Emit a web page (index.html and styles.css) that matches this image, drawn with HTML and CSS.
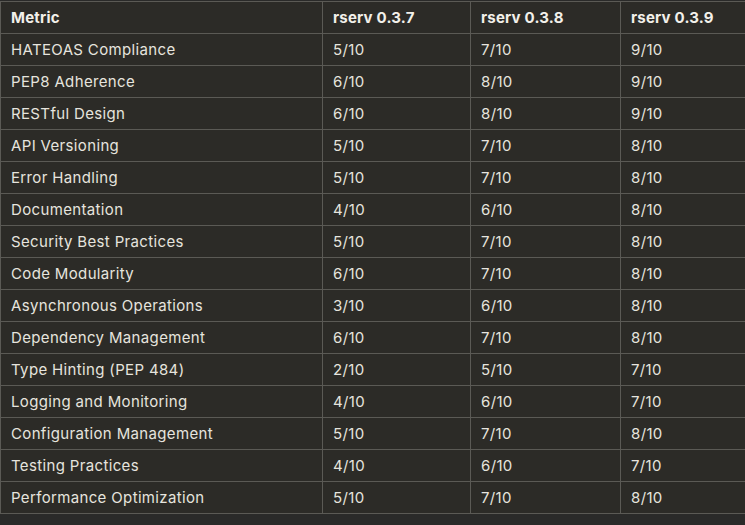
FILE: index.html
```html
<!DOCTYPE html>
<html>
<head>
<meta charset="utf-8">
<link rel="stylesheet" href="styles.css">
</head>
<body>
<div class="wrap">
<table class="grid">
<thead>
<tr><th class="c1">Metric</th><th class="c2">rserv 0.3.7</th><th class="c3">rserv 0.3.8</th><th class="c4">rserv 0.3.9</th></tr>
</thead>
<tbody>
<tr><td>HATEOAS Compliance</td><td>5/10</td><td>7/10</td><td>9/10</td></tr>
<tr><td>PEP8 Adherence</td><td>6/10</td><td>8/10</td><td>9/10</td></tr>
<tr><td>RESTful Design</td><td>6/10</td><td>8/10</td><td>9/10</td></tr>
<tr><td>API Versioning</td><td>5/10</td><td>7/10</td><td>8/10</td></tr>
<tr><td>Error Handling</td><td>5/10</td><td>7/10</td><td>8/10</td></tr>
<tr><td>Documentation</td><td>4/10</td><td>6/10</td><td>8/10</td></tr>
<tr><td>Security Best Practices</td><td>5/10</td><td>7/10</td><td>8/10</td></tr>
<tr><td>Code Modularity</td><td>6/10</td><td>7/10</td><td>8/10</td></tr>
<tr><td>Asynchronous Operations</td><td>3/10</td><td>6/10</td><td>8/10</td></tr>
<tr><td>Dependency Management</td><td>6/10</td><td>7/10</td><td>8/10</td></tr>
<tr><td>Type Hinting (PEP 484)</td><td>2/10</td><td>5/10</td><td>7/10</td></tr>
<tr><td>Logging and Monitoring</td><td>4/10</td><td>6/10</td><td>7/10</td></tr>
<tr><td>Configuration Management</td><td>5/10</td><td>7/10</td><td>8/10</td></tr>
<tr><td>Testing Practices</td><td>4/10</td><td>6/10</td><td>7/10</td></tr>
<tr><td>Performance Optimization</td><td>5/10</td><td>7/10</td><td>8/10</td></tr>
</tbody>
</table>
</div>
</body>
</html>
```
FILE: styles.css
```css
html, body {
  margin: 0;
  padding: 0;
  background: #2a2a29;
  overflow: hidden;
}
.wrap {
  padding-top: 1px;
  width: 800px;
}
.grid {
  border-collapse: collapse;
  table-layout: fixed;
  width: 772px;
  background: #2c2b27;
  font-family: Inter, "Noto Sans", sans-serif;
  font-size: 15px;
  letter-spacing: 0.35px;
  color: #e6e4de;
}
.grid th, .grid td {
  border: 1px solid #5b5a55;
  height: 32px;
  padding: 0 10px;
  text-align: left;
  vertical-align: middle;
  white-space: nowrap;
  box-sizing: border-box;
  line-height: 18px;
}
.grid th {
  font-weight: 700;
  letter-spacing: 0.2px;
  color: #f2f0ea;
}
.c1 { width: 322px; }
.c2 { width: 148px; }
.c3 { width: 150px; }
.c4 { width: 152px; }
```
